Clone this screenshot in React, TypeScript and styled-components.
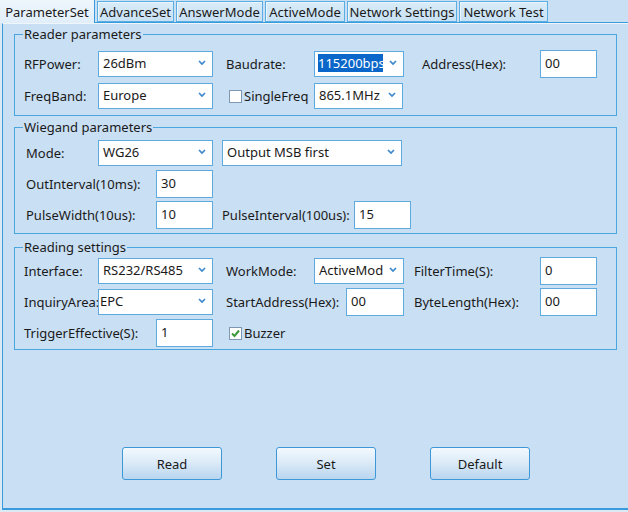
import React from 'react';
import styled, { createGlobalStyle } from 'styled-components';

const Global = createGlobalStyle`
  html, body { margin: 0; padding: 0; background: #DCEAF6; }
  body { font-family: "Noto Sans", "Open Sans", sans-serif; font-size: 13px; color: #1a1a1a; }
  * { box-sizing: border-box; }
  #root { width: 628px; height: 512px; }
`;

const Window = styled.div`
  width: 628px;
  height: 512px;
  overflow: hidden;
  display: flex;
  flex-direction: column;
  background: #DCEAF6;
`;

const TabStrip = styled.div`
  height: 23px;
  display: flex;
  align-items: flex-end;
  gap: 2px;
  background: #C9DFF3;
  border-bottom: 1px solid #3A9BDB;
  flex-shrink: 0;
`;

const Tab = styled.div<{ $w: number; $active?: boolean }>`
  width: ${p => p.$w}px;
  height: ${p => (p.$active ? 23 : 21)}px;
  margin-bottom: ${p => (p.$active ? -1 : 0)}px;
  display: flex;
  align-items: center;
  justify-content: center;
  white-space: nowrap;
  font-size: 13px;
  color: #1a1a1a;
  background: ${p =>
    p.$active
      ? 'linear-gradient(#EEF6FC, #E1EEF9)'
      : 'linear-gradient(#D9ECF9, #C8E1F4)'};
  border: ${p => (p.$active ? 'none' : '1px solid #5AAEE3')};
  border-right: 1px solid ${p => (p.$active ? '#3A9BDB' : '#5AAEE3')};
  box-shadow: ${p => (p.$active ? 'none' : 'inset 1px 1px 0 #EAF5FC')};
`;

const Panel = styled.div`
  flex: 1;
  margin-left: 2px;
  margin-bottom: 2px;
  background: #C9DFF3;
  border-left: 1px solid #3A9BDB;
  border-top: 1px solid #EEF6FC;
  border-bottom: 2px solid #3A9BDB;
  padding: 1px 0 0 11px;
  display: flex;
  flex-direction: column;
`;

const Group = styled.fieldset<{ $pt: number; $pb: number; $mt: number; $gap: number }>`
  width: 603px;
  margin: ${p => p.$mt}px 0 0 0;
  border: 1px solid #4AA6DE;
  padding: ${p => p.$pt}px 0 ${p => p.$pb}px 9px;
  display: flex;
  flex-direction: column;
  gap: ${p => p.$gap}px;
  min-width: 0;
`;

const Legend = styled.legend`
  margin-left: -1px;
  padding: 0 1px;
  line-height: 18px;
  font-size: 13px;
  color: #1a1a1a;
`;

const Row = styled.div`
  display: flex;
  align-items: center;
  height: 28px;
`;

const Label = styled.span<{ $w: number; $ml?: number }>`
  width: ${p => p.$w}px;
  margin-left: ${p => p.$ml ?? 0}px;
  white-space: nowrap;
  flex-shrink: 0;
`;

const SelectBox = styled.div<{ $w: number; $ml?: number; $pad?: number }>`
  width: ${p => p.$w}px;
  margin-left: ${p => p.$ml ?? 0}px;
  height: 26px;
  flex-shrink: 0;
  background: #fff;
  border: 1px solid #5FA9DD;
  display: flex;
  align-items: center;
  padding-left: ${p => p.$pad ?? 4}px;
  padding-bottom: 2px;
`;

const SelectText = styled.span`
  flex: 1;
  overflow: hidden;
  white-space: nowrap;
  min-width: 0;
`;

const Highlight = styled.span`
  background: #0A66C9;
  color: #fff;
  padding: 2px 0 2px 0;
  border-right: 1px solid #E89A3C;
`;

const Chevron = styled.svg`
  width: 20px;
  height: 8px;
  flex-shrink: 0;
`;

const TextBox = styled.div<{ $w: number; $ml?: number }>`
  width: ${p => p.$w}px;
  margin-left: ${p => p.$ml ?? 0}px;
  height: 28px;
  flex-shrink: 0;
  background: #fff;
  border: 1px solid #5FA9DD;
  padding: 2px 0 0 4px;
  line-height: 20px;
  white-space: nowrap;
`;

const Check = styled.label<{ $w: number; $ml?: number }>`
  width: ${p => p.$w}px;
  margin-left: ${p => p.$ml ?? 0}px;
  display: flex;
  align-items: center;
  gap: 2px;
  flex-shrink: 0;
  white-space: nowrap;
`;

const Box = styled.span`
  width: 13px;
  height: 13px;
  background: #fff;
  border: 1px solid #7E98B3;
  display: flex;
  align-items: center;
  justify-content: center;
  flex-shrink: 0;
`;

const ButtonRow = styled.div`
  margin-top: auto;
  margin-bottom: 28px;
  padding-left: 108px;
  display: flex;
  gap: 54px;
`;

const Button = styled.button`
  width: 100px;
  height: 33px;
  border: 1px solid #3E98D8;
  border-radius: 3px;
  background: linear-gradient(#F3F9FE, #DCEBF8 45%, #B9D5EF);
  font-family: "Noto Sans", "Open Sans", sans-serif;
  font-size: 13px;
  color: #1a1a1a;
  padding: 0;
`;

const ChevronIcon = () => (
  <Chevron viewBox="0 0 20 8">
    <path d="M7 2 L10 5 L13 2" fill="none" stroke="#3C88CC" strokeWidth="1.7" />
  </Chevron>
);

const Select = ({ w, ml, pad, children }: { w: number; ml?: number; pad?: number; children: React.ReactNode }) => (
  <SelectBox $w={w} $ml={ml} $pad={pad}>
    <SelectText>{children}</SelectText>
    <ChevronIcon />
  </SelectBox>
);

const CheckBox = ({ w, ml, checked, children }: { w: number; ml?: number; checked?: boolean; children: React.ReactNode }) => (
  <Check $w={w} $ml={ml}>
    <Box>
      {checked && (
        <svg width="11" height="11" viewBox="0 0 11 11">
          <path d="M2 5.5 L4.5 8 L9 2.5" fill="none" stroke="#3A9A3A" strokeWidth="2" />
        </svg>
      )}
    </Box>
    {children}
  </Check>
);

const tabs = [
  { t: 'ParameterSet', w: 95, active: true },
  { t: 'AdvanceSet', w: 77 },
  { t: 'AnswerMode', w: 87 },
  { t: 'ActiveMode', w: 80 },
  { t: 'Network Settings', w: 110 },
  { t: 'Network Test', w: 89 },
];

export default function App() {
  return (
    <>
      <Global />
      <Window>
        <TabStrip>
          {tabs.map(tab => (
            <Tab key={tab.t} $w={tab.w} $active={tab.active}>
              {tab.t}
            </Tab>
          ))}
        </TabStrip>
        <Panel>
          <Group $mt={0} $pt={7} $pb={5} $gap={4}>
            <Legend>Reader parameters</Legend>
            <Row>
              <Label $w={74}>RFPower:</Label>
              <Select w={115}>26dBm</Select>
              <Label $w={88} $ml={13}>Baudrate:</Label>
              <Select w={90} pad={3}>
                <Highlight>115200bps</Highlight>
              </Select>
              <Label $w={118} $ml={18}>Address(Hex):</Label>
              <TextBox $w={57}>00</TextBox>
            </Row>
            <Row>
              <Label $w={74}>FreqBand:</Label>
              <Select w={115}>Europe</Select>
              <CheckBox w={85} ml={16}>SingleFreq</CheckBox>
              <Select w={89}>865.1MHz</Select>
            </Row>
          </Group>

          <Group $mt={2} $pt={3} $pb={4} $gap={3}>
            <Legend>Wiegand parameters</Legend>
            <Row>
              <Label $w={72} $ml={2}>Mode:</Label>
              <Select w={115}>WG26</Select>
              <Select w={180} ml={9}>Output MSB first</Select>
            </Row>
            <Row>
              <Label $w={130} $ml={2}>OutInterval(10ms):</Label>
              <TextBox $w={57}>30</TextBox>
            </Row>
            <Row>
              <Label $w={130} $ml={2}>PulseWidth(10us):</Label>
              <TextBox $w={57}>10</TextBox>
              <Label $w={132} $ml={9}>PulseInterval(100us):</Label>
              <TextBox $w={57}>15</TextBox>
            </Row>
          </Group>

          <Group $mt={4} $pt={1} $pb={2} $gap={3}>
            <Legend>Reading settings</Legend>
            <Row>
              <Label $w={74}>Interface:</Label>
              <Select w={115}>RS232/RS485</Select>
              <Label $w={88} $ml={13}>WorkMode:</Label>
              <Select w={90}>ActiveMode</Select>
              <Label $w={126} $ml={10}>FilterTime(S):</Label>
              <TextBox $w={57}>0</TextBox>
            </Row>
            <Row>
              <Label $w={74}>InquiryArea:</Label>
              <Select w={115} pad={1}>EPC</Select>
              <Label $w={120} $ml={13}>StartAddress(Hex):</Label>
              <TextBox $w={58}>00</TextBox>
              <Label $w={126} $ml={10}>ByteLength(Hex):</Label>
              <TextBox $w={57}>00</TextBox>
            </Row>
            <Row>
              <Label $w={132}>TriggerEffective(S):</Label>
              <TextBox $w={57}>1</TextBox>
              <CheckBox w={90} ml={16} checked>Buzzer</CheckBox>
            </Row>
          </Group>

          <ButtonRow>
            <Button>Read</Button>
            <Button>Set</Button>
            <Button>Default</Button>
          </ButtonRow>
        </Panel>
      </Window>
    </>
  );
}
